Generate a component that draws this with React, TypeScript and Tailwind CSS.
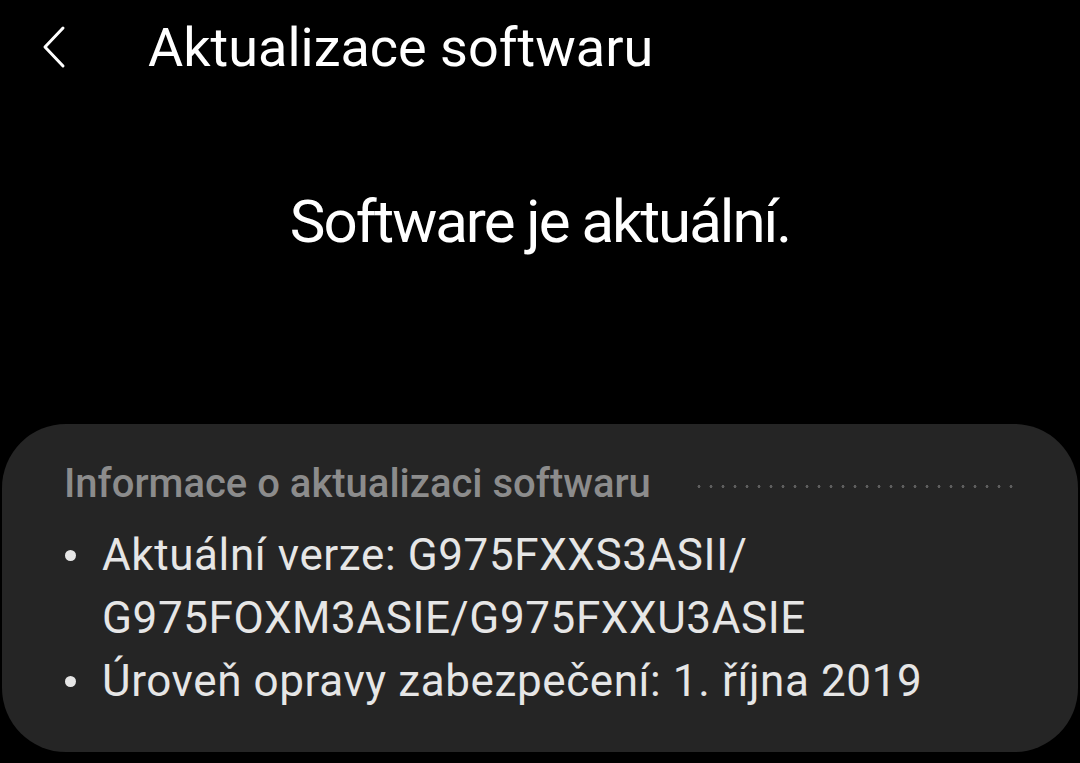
export default function App() {
  return (
    <div
      className="flex h-[763px] w-[1080px] flex-col overflow-hidden bg-black text-white"
      style={{ fontFamily: "Roboto, 'Noto Sans', sans-serif" }}
    >
      {/* top bar */}
      <div className="flex h-[96px] items-center pl-[42px]">
        <svg width="24" height="44" viewBox="0 0 24 44" fill="none" className="mt-[-2px]">
          <path d="M21 3 L3 22 L21 41" stroke="white" strokeWidth="3" strokeLinecap="round" strokeLinejoin="round" />
        </svg>
        <h1 className="ml-[82px] text-[54px] leading-none tracking-[0px]">Aktualizace softwaru</h1>
      </div>

      <div className="flex h-[328px] items-start justify-center pt-[96px]">
        <p className="text-[60px] leading-none tracking-[-2px]">Software je aktuální.</p>
      </div>

      <div className="mx-[2px] flex h-[328px] flex-col rounded-[64px] bg-[#252525] pl-[62px] pr-[64px] pt-[40px]">
        <div className="flex items-center gap-[42px]">
          <h2 className="text-[40px] font-medium leading-none text-[#8c8c8c]">
            Informace o aktualizaci softwaru
          </h2>
          <div className="mt-[4px] h-[3px] flex-1 bg-[radial-gradient(circle,#5e5e5e_1.4px,transparent_1.6px)] bg-[length:12px_3px]" />
        </div>
        <ul className="mt-[20px] text-[44px] leading-[63px] tracking-[0.6px] text-[#e6e6e6]">
          <li className="flex">
            <span className="flex h-[63px] w-[38px] shrink-0 items-center">
              <span className="ml-[1px] h-[11px] w-[11px] rounded-full bg-[#e6e6e6]" />
            </span>
            <span>
              Aktuální verze: G975FXXS3ASII/
              <br />
              G975FOXM3ASIE/G975FXXU3ASIE
            </span>
          </li>
          <li className="flex">
            <span className="flex h-[63px] w-[38px] shrink-0 items-center">
              <span className="ml-[1px] h-[11px] w-[11px] rounded-full bg-[#e6e6e6]" />
            </span>
            <span>Úroveň opravy zabezpečení: 1. října 2019</span>
          </li>
        </ul>
      </div>
    </div>
  );
}
